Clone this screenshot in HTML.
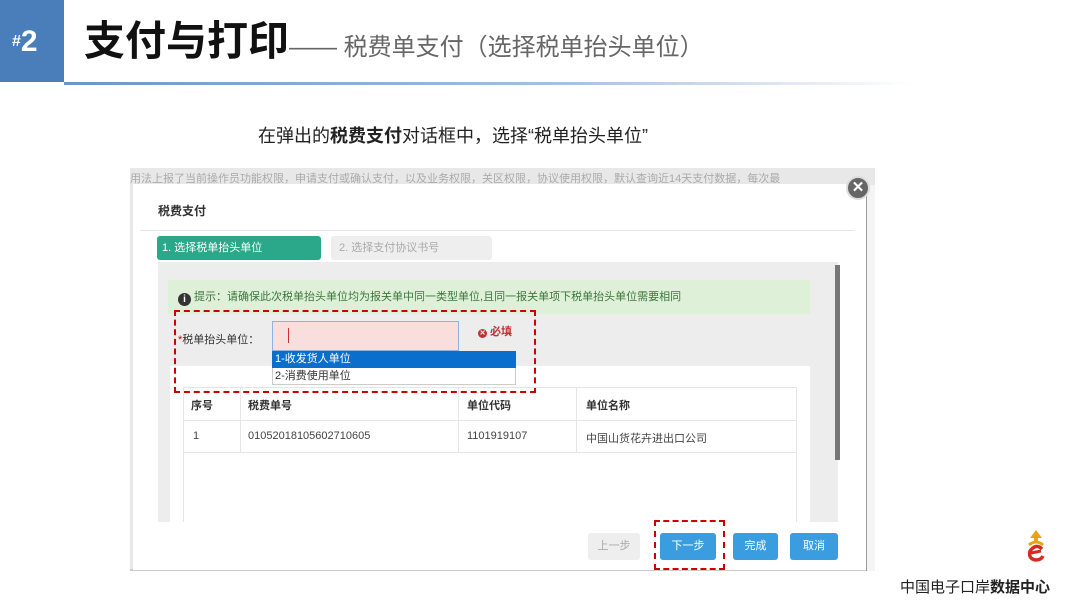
<!DOCTYPE html>
<html><head><meta charset="utf-8"><style>
*{margin:0;padding:0;box-sizing:border-box}
body{width:1080px;height:606px;background:#fff;position:relative;overflow:hidden;font-family:"Liberation Sans","Noto Sans CJK SC",sans-serif}
.a{position:absolute}
.cn{font-family:"Liberation Sans","Noto Sans CJK SC",sans-serif}
</style></head><body>
<div class="a" style="left:0;top:0;width:64px;height:82px;background:#4a7ebb"></div>
<div class="a" style="left:12px;top:22px;color:#fff;font-weight:bold;font-size:30px;line-height:40px"><span style="font-size:16px;vertical-align:top">#</span>2</div>
<div class="a" style="left:64px;top:82px;width:850px;height:3px;background:linear-gradient(90deg,#6b96c8,#a9c1df 60%,rgba(255,255,255,0))"></div>
<div class="a cn" style="left:84px;top:16px;font-size:41px;font-weight:bold;color:#111;line-height:50px;white-space:nowrap">支付与打印<span style="font-weight:normal;font-size:24px;color:#666">—— 税费单支付（选择税单抬头单位）</span></div>
<div class="a cn" style="left:258px;top:122px;font-size:18px;color:#222;white-space:nowrap">在弹出的<b>税费支付</b>对话框中，选择“税单抬头单位”</div>

<div class="a" style="left:130px;top:168px;width:745px;height:403px;background:#e8e8e8;border-bottom:2px solid #ccc"></div>
<div class="a" style="left:130px;top:170px;width:730px;height:14px;overflow:hidden;font-size:11px;color:#aaa;white-space:nowrap">用法上报了当前操作员功能权限，申请支付或确认支付，以及业务权限，关区权限，协议使用权限，默认查询近14天支付数据，每次最</div>
<div class="a" style="left:866px;top:185px;width:9px;height:386px;background:#f4f4f4;border-left:1px solid #999"></div>
<div class="a" style="left:133px;top:184px;width:733px;height:386px;background:#fff"></div>
<div class="a" style="left:846px;top:176px;width:24px;height:24px;border-radius:50%;background:#666;border:2px solid #ddd;color:#fff;font-size:15px;font-weight:bold;text-align:center;line-height:20px">✕</div>
<div class="a cn" style="left:158px;top:202px;font-size:12px;font-weight:bold;color:#333">税费支付</div>
<div class="a" style="left:140px;top:230px;width:715px;height:1px;background:#e5e5e5"></div>
<div class="a cn" style="left:157px;top:236px;width:164px;height:24px;background:#2aa889;border-radius:3px;color:#fff;font-size:11px;line-height:24px;padding-left:5px">1. 选择税单抬头单位</div>
<div class="a cn" style="left:331px;top:236px;width:161px;height:24px;background:#eee;border-radius:3px;color:#aaa;font-size:11px;line-height:24px;padding-left:8px">2. 选择支付协议书号</div>
<div class="a" style="left:158px;top:262px;width:680px;height:260px;background:#ededed"></div>
<div class="a" style="left:835px;top:265px;width:5px;height:195px;background:#777"></div>
<div class="a cn" style="left:168px;top:280px;width:642px;height:34px;background:#dff0d8;font-size:11px;color:#3c763d;line-height:34px;padding-left:10px;white-space:nowrap"><span style="display:inline-block;width:13px;height:13px;border-radius:50%;background:#333;color:#fff;font-size:10px;font-weight:bold;text-align:center;line-height:13px;vertical-align:-2px">i</span> 提示：请确保此次税单抬头单位均为报关单中同一类型单位,且同一报关单项下税单抬头单位需要相同</div>
<div class="a" style="left:170px;top:366px;width:640px;height:156px;background:#fff"></div>
<div class="a cn" style="left:178px;top:331px;font-size:11px;color:#333"><span style="color:#c00">*</span>税单抬头单位：</div>
<div class="a" style="left:272px;top:321px;width:187px;height:30px;background:#f9dede;border:1px solid #8ab4e8"></div>
<div class="a" style="left:288px;top:328px;width:1px;height:15px;background:#c33"></div>
<div class="a cn" style="left:478px;top:323px;font-size:11px;color:#b33;font-weight:bold"><span style="display:inline-block;width:9px;height:9px;border-radius:50%;background:#b33;color:#fff;font-size:7px;text-align:center;line-height:9px;vertical-align:0">✕</span> 必填</div>
<div class="a" style="left:272px;top:351px;width:244px;height:34px;background:#fff;border:1px solid #ccc"></div>
<div class="a cn" style="left:272px;top:351px;width:244px;height:17px;background:#0a6fcc;color:#fff;font-size:11px;line-height:17px;padding-left:3px">1-收发货人单位</div>
<div class="a cn" style="left:272px;top:368px;font-size:11px;color:#333;line-height:17px;padding-left:3px">2-消费使用单位</div>
<div class="a" style="left:174px;top:310px;width:362px;height:83px;border:2px dashed #c00"></div>
<div class="a" style="left:183px;top:387px;width:614px;height:135px;border:1px solid #e5e5e5;border-bottom:none"></div>
<div class="a" style="left:183px;top:420px;width:614px;height:1px;background:#e5e5e5"></div>
<div class="a" style="left:183px;top:452px;width:614px;height:1px;background:#e5e5e5"></div>
<div class="a" style="left:240px;top:387px;width:1px;height:66px;background:#e5e5e5"></div>
<div class="a" style="left:458px;top:387px;width:1px;height:66px;background:#e5e5e5"></div>
<div class="a" style="left:576px;top:387px;width:1px;height:66px;background:#e5e5e5"></div>
<div class="a cn" style="left:191px;top:397px;font-size:11px;font-weight:bold;color:#333">序号</div>
<div class="a cn" style="left:248px;top:397px;font-size:11px;font-weight:bold;color:#333">税费单号</div>
<div class="a cn" style="left:467px;top:397px;font-size:11px;font-weight:bold;color:#333">单位代码</div>
<div class="a cn" style="left:586px;top:397px;font-size:11px;font-weight:bold;color:#333">单位名称</div>
<div class="a cn" style="left:193px;top:430px;font-size:11px;color:#444">1</div>
<div class="a cn" style="left:248px;top:430px;font-size:11px;color:#444">01052018105602710605</div>
<div class="a cn" style="left:467px;top:430px;font-size:11px;color:#444">1101919107</div>
<div class="a cn" style="left:586px;top:430px;font-size:11px;color:#444">中国山货花卉进出口公司</div>
<div class="a cn" style="left:588px;top:533px;width:52px;height:27px;background:#eee;border-radius:3px;color:#aaa;font-size:11px;text-align:center;line-height:27px">上一步</div>
<div class="a cn" style="left:660px;top:533px;width:56px;height:27px;background:#3a9de0;border-radius:3px;color:#fff;font-size:11px;text-align:center;line-height:27px">下一步</div>
<div class="a cn" style="left:733px;top:533px;width:45px;height:27px;background:#3a9de0;border-radius:3px;color:#fff;font-size:11px;text-align:center;line-height:27px">完成</div>
<div class="a cn" style="left:790px;top:533px;width:48px;height:27px;background:#3a9de0;border-radius:3px;color:#fff;font-size:11px;text-align:center;line-height:27px">取消</div>
<div class="a" style="left:654px;top:520px;width:71px;height:50px;border:2px dashed #c00"></div>
<svg class="a" style="left:1024px;top:528px" width="24" height="38" viewBox="0 0 24 36"><path d="M12 1 L6 9 L10 9 L10 14 L14 14 L14 9 L18 9Z" fill="#e8a317"/><path d="M5 16 Q12 10 19 16" stroke="#e8a317" stroke-width="3" fill="none"/><path d="M18 20 Q12 14 6 22 Q4 30 12 31 Q17 31 19 27" stroke="#d62b20" stroke-width="3.5" fill="none"/><path d="M7 24 L17 22" stroke="#d62b20" stroke-width="3"/></svg>
<div class="a cn" style="left:900px;top:576px;font-size:15px;color:#222;white-space:nowrap">中国电子口岸<b>数据中心</b></div>
</body></html>
